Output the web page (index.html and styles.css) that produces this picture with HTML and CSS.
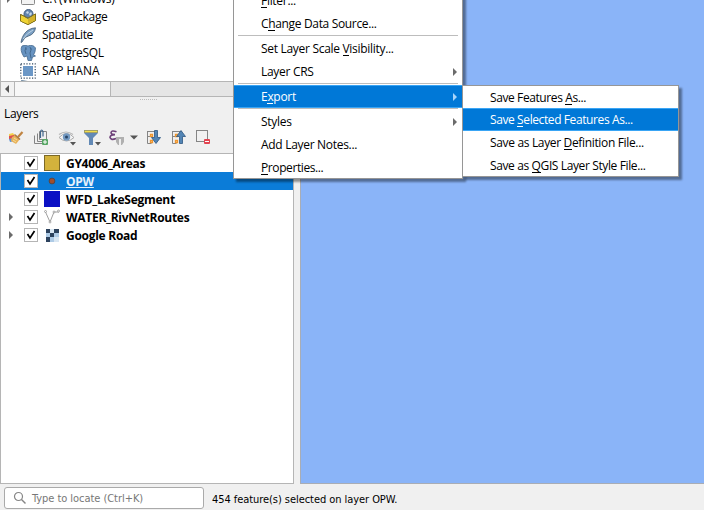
FILE: index.html
```html
<!DOCTYPE html>
<html lang="en">
<head>
<meta charset="utf-8">
<title>QGIS</title>
<link rel="stylesheet" href="styles.css">
</head>
<body>
<div class="app">
  <div class="workspace">
    <aside class="dock">
      <section class="browser">
        <ul class="tree">
          <li><i class="arrow"></i><svg width="16" height="16"><rect x="1.500" y=".5" width="13" height="13" rx="1" fill="#f3f3f3" stroke="#8a8a8a"/></svg><span class="t-win">C:\ (Windows)</span></li>
          <li><i></i><svg width="16" height="16"><path d="M.5 5.500L8 9l7.500-4v6.500L8 15.500l-7.500-3.500z" fill="#f4dc3f" stroke="#81701c"/><path d="M8 9v6.500l7.500-4V5z" fill="#d9b722"/><circle cx="8.500" cy="5" r="4.500" fill="#6084ae" stroke="#405d80"/><path d="M6 3l2-1 1 2-2 1zM9 5l2-2 1 2-2 2z" fill="#c5d7e9"/><path d="M.5 5.500L8 9l7.500-4L15.500 11.500L8 15.500L.5 12z" fill="none" stroke="#81701c"/><path d="M1 6.500L8 10l7-4v5l-7 4-7-3z" fill="#efd333"/><path d="M8 10l7-4v5l-7 4z" fill="#d5b32b"/></svg><span>GeoPackage</span></li>
          <li><i></i><svg width="16" height="16"><path d="M1 15.500C2 9 6 1.500 15.500.8c-.5 4-3 7-7 8.200L5 10.500 2 15z" fill="#7ba0c4" stroke="#415a73" stroke-width=".8"/><path d="M3 12Q7 6 13 3" fill="none" stroke="#c0d4e5"/></svg><span class="t-spatial">SpatiaLite</span></li>
          <li><i></i><svg width="16" height="16"><path d="M2 1Q5-.5 8 1q5-2 7.500 2 0 4-2 7l2 1-3 1-1 3.500H8l-1-4.500-3 1Q-.5 5 2 1z" fill="#6793c1" stroke="#46698e" stroke-width=".8"/><path d="M6 2q-2 4 0 7m4-7q2 3 0 6l1 5M6 4h1m4 0h1" stroke="#355778" fill="none" stroke-width=".7"/></svg><span>PostgreSQL</span></li>
          <li><i></i><svg width="16" height="16"><rect x=".8" y=".8" width="14.400" height="14.400" fill="none" stroke="#334960" stroke-width="1.200" stroke-dasharray="1.200 1.600"/><rect x="3" y="3" width="10" height="10" fill="#6b97c6"/></svg><span class="t-sap">SAP HANA</span></li>
          <li class="last"><i></i><svg width="16" height="16"><path d="M1 0l10 1.500-1 4H3z" fill="#5a7894"/></svg></li>
        </ul>
        <div class="scroll"><b></b><em></em></div>
      </section>
      <div class="grip"></div>
      <h2>Layers</h2>
      <div class="tools">
        <svg width="235" height="24" viewBox="0 126 235 24">
          <path d="M9 134l4-1 3 4-3 3-4-1z" fill="#f4d04a"/><path d="M9 136l5-1 1 3-6 1z" fill="#dc4f50"/><path d="M9 139l5-1 1 3-5 1z" fill="#5b91d4"/><path d="M12 137l4-2 4 4-4 5-5-3z" fill="#e8b25a"/><path d="M13 140l3 2m-2-4l3 2" stroke="#f4dc9b"/><path d="M18 137l4.500-5" stroke="#c08442" stroke-width="2.200"/><path d="M14.500 134.500l5.500 5" stroke="#a87b48" stroke-width="1.500"/>
          <g fill="none" stroke="#858585"><path d="M34.500 135.500v8h8M37.500 133.500v8h8M39.500 131.500h7v8h-7z"/></g><path d="M40.500 138v-6.500q1-3 2.500 0v5" stroke="#3f658c" fill="none" stroke-width="1.200"/><rect x="42" y="139" width="6" height="6" rx="1" fill="#57a665"/><path d="M45 140v4m-2-2h4" stroke="#fff"/>
          <path d="M59 137.500q7.500-8 15 0-7.500 7-15 0z" fill="#f5f5f5" stroke="#aaa"/><path d="M59 134.500q7-5 14 0" fill="none" stroke="#b5b5b5" stroke-width="1.200"/><circle cx="66.500" cy="137" r="3.700" fill="#7399c1"/><circle cx="66.500" cy="137" r="1.500" fill="#294566"/>
          <path d="M84 130h14v3l-5 5v7h-4v-7l-5-5z" fill="#6289b5"/><path d="M84.500 130.500h13v2h-13z" fill="#f1df4e" stroke="#a59a58" stroke-width=".7"/>
          <path d="M116.500 131.800q-5-2-5.500.8 0 2 4 2-5 0-5 3 1 3 6 1" fill="none" stroke="#6c3f78" stroke-width="1.600"/><path d="M116 137h8v5l-2 3h-4l-2-3z" fill="#b0b0b0"/><path d="M119 139h2v6h-2z" fill="#eee"/>
          <path d="M70 142h6l-3 3.500zM95 142h6l-3 3.500zM130 135.500h8l-4 4z" fill="#555"/>
          <g fill="none" stroke="#858585"><path d="M147 131.500h10m-9.500 0v12h4m-4-7h4M172 131.500h10m-9.500 0v12h4m-4-7h4"/></g><g fill="#fff4dc" stroke="#ef962f" stroke-width="1.300"><path d="M150.500 134.500h2v2h-2zM150.500 140.500h2v2h-2zM175.500 134.500h2v2h-2zM175.500 140.500h2v2h-2z"/></g>
          <path d="M154.500 130.500h3v7h3l-4.500 6-4.500-6h3z" fill="#5385b5" stroke="#2d5781" stroke-width=".8"/><path d="M179.500 143.500h3v-7h3l-4.500-6-4.500 6h3z" fill="#5385b5" stroke="#2d5781" stroke-width=".8"/>
          <rect x="196.500" y="130.500" width="11" height="11" fill="#f1f1f1" stroke="#858585"/><rect x="204" y="139" width="6" height="5" rx="1" fill="#e24450"/><path d="M205 141.500h4" stroke="#fff"/>
        </svg>
      </div>
      <ul class="layers">
        <li><i></i><svg class="check" viewBox="0 0 12 12"><path d="M2.500 5l2.500 4 4.500-7"/></svg><svg width="16" height="16"><rect x=".5" y=".5" width="15" height="15" fill="#d3b23c" stroke="#7b6928"/></svg><span>GY4006_Areas</span></li>
        <li class="selected"><i></i><svg class="check" viewBox="0 0 12 12"><path d="M2.500 5l2.500 4 4.500-7"/></svg><svg width="16" height="16"><circle cx="8" cy="8" r="2.900" fill="#a24e2c" stroke="#544747"/></svg><span>OPW</span></li>
        <li><i></i><svg class="check" viewBox="0 0 12 12"><path d="M2.500 5l2.500 4 4.500-7"/></svg><svg width="16" height="16"><rect width="16" height="16" fill="#0b10c4"/></svg><span>WFD_LakeSegment</span></li>
        <li><i class="arrow"></i><svg class="check" viewBox="0 0 12 12"><path d="M2.500 5l2.500 4 4.500-7"/></svg><svg width="16" height="16"><path d="M1.500 3l4.500 10 4-10h5" fill="none" stroke="#a0a0a0"/><g fill="#fff" stroke="#8b8b8b" stroke-width=".7"><circle cx="1.500" cy="2.500" r="1"/><circle cx="6" cy="13" r="1"/><circle cx="10" cy="3" r="1"/><circle cx="14.500" cy="2" r="1"/></g></svg><span>WATER_RivNetRoutes</span></li>
        <li><i class="arrow"></i><svg class="check" viewBox="0 0 12 12"><path d="M2.500 5l2.500 4 4.500-7"/></svg><svg width="16" height="16"><path d="M2 2h13v13H2z" fill="#aecbe6"/><path d="M2 2h4v4H2zM10 2h5v4h-5zM6 6h4v4H6zM2 10h4v5H2z" fill="#2d435e"/><path d="M6 2h4v4H6zM10 10h5v5h-5z" fill="#d9e7f3"/><path d="M10 6h5v4h-5z" fill="#aecbe6"/></svg><span>Google Road</span></li>
      </ul>
    </aside>
    <main class="canvas"></main>
  </div>
  <footer>
    <div class="locator"><svg width="14" height="14"><circle cx="5.500" cy="5.500" r="4" fill="none" stroke="#858585" stroke-width="1.200"/><path d="M8.500 8.500l4 4" stroke="#858585" stroke-width="1.500"/></svg><span>Type to locate (Ctrl+K)</span></div>
    <span class="message">454 feature(s) selected on layer OPW.</span>
  </footer>
</div>
<div class="menu context">
  <div class="item"><span><u>F</u>ilter...</span></div>
  <div class="item"><span class="m-change">C<u>h</u>ange Data Source...</span></div>
  <hr>
  <div class="item"><span>Set Layer Scale <u>V</u>isibility...</span></div>
  <div class="item"><span>Layer CRS</span><i class="arrow"></i></div>
  <hr>
  <div class="item active"><span>E<u>x</u>port</span><i class="arrow"></i></div>
  <hr>
  <div class="item"><span>Styles</span><i class="arrow"></i></div>
  <div class="item"><span>Add Layer Notes...</span></div>
  <div class="item"><span class="m-props"><u>P</u>roperties...</span></div>
</div>
<div class="menu submenu">
  <div class="item"><span>Save Features <u>A</u>s...</span></div>
  <div class="item active"><span>Save <u>S</u>elected Features As...</span></div>
  <div class="item"><span class="s-def">Save as Layer <u>D</u>efinition File...</span></div>
  <div class="item"><span class="s-style">Save as <u>Q</u>GIS Layer Style File...</span></div>
</div>
</body>
</html>
```
FILE: styles.css
```css
* { box-sizing: border-box; }
body { margin: 0; overflow: hidden; background: #f0f0f0; color: #000; font: 12px/18px "Open Sans", "Noto Sans", sans-serif; letter-spacing: -.3px; }
svg { display: block; flex: none; }
span { white-space: nowrap; }
ul { list-style: none; margin: 0; padding: 0; }
.app { width: 704px; height: 510px; display: flex; flex-direction: column; }
.workspace { height: 484px; display: flex; gap: 6px; }
.dock { width: 294px; display: flex; flex-direction: column; }
.canvas { flex: 1; background: #8ab4f8; border: solid #a9adb5; border-width: 0 0 1px 1px; }
.browser { height: 97px; border: 1px solid #b5b5b5; border-top: 0; background: #fff; display: flex; flex-direction: column; overflow: hidden; }
.tree { height: 82px; overflow: hidden; }
.tree li { height: 18px; display: flex; align-items: center; }
.tree li:first-child { margin-top: -10px; }
.tree .last { align-items: flex-start; }
.tree li > i { width: 19px; flex: none; }
.tree span { margin-left: 6px; }
.t-spatial { letter-spacing: -.4px; }
.t-sap { letter-spacing: 0; }
.arrow { display: flex; }
.arrow::before { content: ""; border: solid transparent; border-width: 4px 0 4px 4px; border-left-color: #6b6b6b; }
.tree .arrow { padding-left: 6px; }
.scroll { height: 15px; flex: none; border-top: 1px solid #b5b5b5; background: #e5e5e5; display: flex; }
.scroll b { width: 14px; background: #f2f2f2; border-right: 1px solid #b5b5b5; display: flex; align-items: center; padding-left: 4px; }
.scroll b::before { content: ""; border: solid transparent; border-width: 4px 4px 4px 0; border-right-color: #555; }
.scroll em { width: 96px; background: #f7f7f7; border-right: 1px solid #b5b5b5; }
.grip { height: 3px; width: 17px; margin: 0 0 1px 140px; border-bottom: 1px dotted #bbb; }
h2 { margin: 0; height: 25px; padding: 4px 0 0 4px; font-size: 12px; line-height: 18px; font-weight: 400; }
.tools { height: 27px; }
.layers { flex: 1; border: 1px solid #b5b5b5; background: #fff; font-weight: 700; letter-spacing: -.28px; }
.layers li { height: 18px; display: flex; align-items: center; }
.layers li > i { width: 23px; flex: none; padding-left: 8px; }
.check { width: 14px; height: 14px; background: #fff; border: 1px solid #b5b5b5; margin-right: 6px; }
.check path { fill: none; stroke: #000; stroke-width: 1.700; }
.layers span { margin-left: 6px; padding-top: 1px; }
.layers .selected { background: #0b7cd8; color: #e6f1fb; }
.layers .selected span { text-decoration: underline; }
footer { height: 26px; display: flex; align-items: flex-start; padding: 3px 4px 0; }
.locator { width: 200px; height: 22px; border: 1px solid #aaa; border-radius: 3px; background: #fff; color: #777; display: flex; align-items: center; padding-left: 8px; font: 11px "DejaVu Sans Condensed", "DejaVu Sans", sans-serif; letter-spacing: -.05px; }
.locator span { margin: 1px 0 0 5px; }
.message { margin: 4px 0 0 8px; font: 11px/18px "DejaVu Sans Condensed", "DejaVu Sans", sans-serif; letter-spacing: -.06px; }
.menu { position: absolute; background: #fff; border: 1px solid #969696; box-shadow: 3px 3px 2px rgba(0,0,0,.4); }
.context { left: 233px; top: -12px; width: 230px; height: 191px; }
.submenu { left: 462px; top: 85px; width: 217px; height: 92px; letter-spacing: -.4px; }
.item { height: 23px; display: flex; align-items: center; justify-content: space-between; padding: 0 5px 0 27px; }
.item span { padding-top: 1px; }
.submenu .item:first-child { height: 22px; }
.menu hr { height: 1px; margin: 0 4px 1px; border: 0; background: #bdbdbd; }
.active { background: #0078d7; color: #fff; border: 1px solid #39a5f5; border-width: 1px 0; }
.active .arrow::before { border-left-color: #a8d4fa; }
.m-change { letter-spacing: -.34px; }
.m-props { letter-spacing: -.4px; }
.s-def { letter-spacing: -.34px; }
.s-style { letter-spacing: -.38px; }
u { text-decoration: none; display: inline-block; height: 15px; line-height: 15px; border-bottom: 1px solid currentColor; }
```
